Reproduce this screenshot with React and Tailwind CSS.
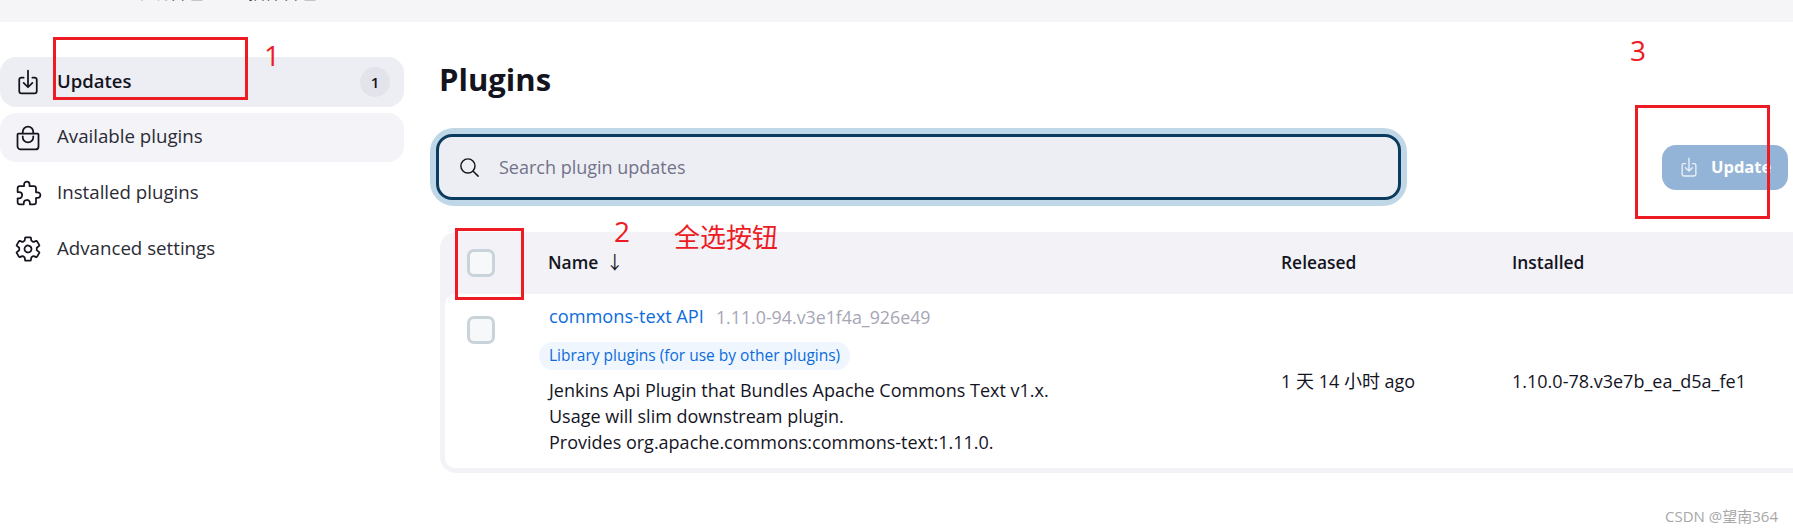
import React from "react";
import { IoDownloadOutline, IoBagHandleOutline, IoExtensionPuzzleOutline, IoSettingsOutline, IoSearchOutline } from "react-icons/io5";

function NavItem({ icon, label, active, hover, badge, cls }) {
  return (
    <div className={`flex items-center pl-[14px] pr-[14px] rounded-[16px] ${cls} ${active ? "bg-[#edeef3] font-semibold text-[#14141f] text-[18.5px]" : hover ? "bg-[#f3f3f8] text-[#2b2b36] text-[18.7px]" : "text-[#2b2b36] text-[18.7px]"}`}>
      <span className="w-[43px] shrink-0 text-[#14141f] text-[28px] flex items-center">{icon}</span>
      <span className="flex-1 -mt-[2px]">{label}</span>
      {badge && <span className="w-[30px] h-[30px] rounded-full bg-[#e3e3ec] flex items-center justify-center text-[15px] font-semibold">{badge}</span>}
    </div>
  );
}

function Checkbox() {
  return <div className="w-[28px] h-[28px] shrink-0 rounded-[7px] border-[3px] border-[#c8d3da] bg-[#f7f8fa]" />;
}

function Mark({ cls, children }) {
  return <div className={`absolute text-[#ed1c24] whitespace-nowrap ${cls}`}>{children}</div>;
}

export default function App() {
  return (
    <div className="relative w-[1793px] h-[532px] overflow-hidden bg-white text-[#14141f] font-['Open_Sans','Noto_Sans_CJK_SC',sans-serif]">
      <div className="h-[22px] bg-[#f5f5f8] overflow-hidden">
        <div className="flex items-center gap-[20px] pl-[110px] -mt-[19px] h-[24px] text-[17px] text-[#33333f]">
          <span className="text-[12px] w-[5px]">›</span>
          <span>系统管理</span>
          <span className="text-[12px] w-[5px]">›</span>
          <span>插件管理</span>
        </div>
      </div>
      <div className="flex">
        <aside className="w-[404px] shrink-0 pt-[35px] flex flex-col">
          <NavItem active label="Updates" badge="1" cls="h-[50px]" icon={<IoDownloadOutline />} />
          <NavItem hover label="Available plugins" cls="h-[49px] mt-[6px]" icon={<IoBagHandleOutline />} />
          <NavItem label="Installed plugins" cls="h-[50px] mt-[6px]" icon={<IoExtensionPuzzleOutline className="ml-[1px]" />} />
          <NavItem label="Advanced settings" cls="h-[50px] mt-[6px]" icon={<IoSettingsOutline />} />
        </aside>
        <main className="flex-1 min-w-0 pl-[33px]">
          <h1 className="mt-[35px] h-[44px] flex items-center pl-[2px] text-[31px] font-bold leading-none text-[#14141f]">Plugins</h1>
          <div className="flex items-center mt-[27px]">
            <div className="w-[965px] ml-[-7px] h-[66px] box-content rounded-[24px] border-[6px] border-[#bfd7e6] shrink-0">
              <div className="h-full rounded-[16px] border-[3px] border-[#0b3c5f] bg-[#edeef3] flex items-center pl-[19px] text-[18px] text-[#72728a]">
                <IoSearchOutline className="text-[23px] text-[#14141f] mr-[18px]" />
                <span>Search plugin updates</span>
              </div>
            </div>
            <button className="ml-[255px] w-[126px] h-[45px] shrink-0 rounded-[14px] bg-[#94b4d7] text-white font-bold text-[16.5px] flex items-center justify-start pl-[16px] gap-[11px]">
              <IoDownloadOutline className="text-[22px] opacity-80" />
              Update
            </button>
          </div>
          <div className="mt-[26px] ml-[3px] bg-[#f2f2f7] rounded-l-[16px] pl-[5px] pb-[5px]">
            <div className="h-[62px] flex items-center text-[17.4px] font-semibold">
              <div className="w-[22px]" />
              <Checkbox />
              <div className="w-[53px]" />
              <div className="w-[733px] -mt-[2px]">Name <span className="font-normal ml-[3px] text-[18px]">↓</span></div>
              <div className="w-[231px] -mt-[2px]">Released</div>
              <div className="-mt-[2px]">Installed</div>
            </div>
            <div className="h-[174px] bg-white rounded-l-[10px] flex pt-[22px] text-[18px]">
              <div className="w-[22px]" />
              <Checkbox />
              <div className="w-[54px]" />
              <div className="w-[732px] -mt-[11px]">
                <div className="h-[24px] flex items-center gap-[12px]">
                  <span className="text-[18.2px] text-[#0b6cdc]">commons-text API</span>
                  <span className="text-[17.8px] text-[#a6a6b5]">1.11.0-94.v3e1f4a_926e49</span>
                </div>
                <div className="mt-[13px] -ml-[10px] w-[311px] h-[28px] rounded-full bg-[#f0f6fe] flex items-center pl-[10px] text-[15.5px] text-[#0b6cdc] whitespace-nowrap">Library plugins (for use by other plugins)</div>
                <div className="mt-[7px] leading-[26px] text-[18px] whitespace-nowrap">
                  <div>Jenkins Api Plugin that Bundles Apache Commons Text v1.x.</div>
                  <div>Usage will slim downstream plugin.</div>
                  <div>Provides org.apache.commons:commons-text:1.11.0.</div>
                </div>
              </div>
              <div className="w-[231px] pt-[52px]">1 天 14 小时 ago</div>
              <div className="pt-[52px]">1.10.0-78.v3e7b_ea_d5a_fe1</div>
            </div>
          </div>
          <div className="text-right pr-[15px] pt-[32px] text-[15px] text-[#a8a8a8]">CSDN @望南364</div>
        </main>
      </div>

      <Mark cls="left-[53px] top-[37px] w-[195px] h-[63px] border-[3px] border-[#ed1c24]" />
      <Mark cls="left-[455px] top-[228px] w-[69px] h-[72px] border-[3px] border-[#ed1c24]" />
      <Mark cls="left-[1635px] top-[105px] w-[135px] h-[114px] border-[3px] border-[#ed1c24]" />
      <Mark cls="left-[264px] top-[34px] text-[28px]">1</Mark>
      <Mark cls="left-[614px] top-[210px] text-[28px]">2</Mark>
      <Mark cls="left-[1630px] top-[29px] text-[28px]">3</Mark>
      <Mark cls="left-[674px] top-[216px] text-[26px] font-['Noto_Sans_CJK_SC',sans-serif]">全选按钮</Mark>
    </div>
  );
}
